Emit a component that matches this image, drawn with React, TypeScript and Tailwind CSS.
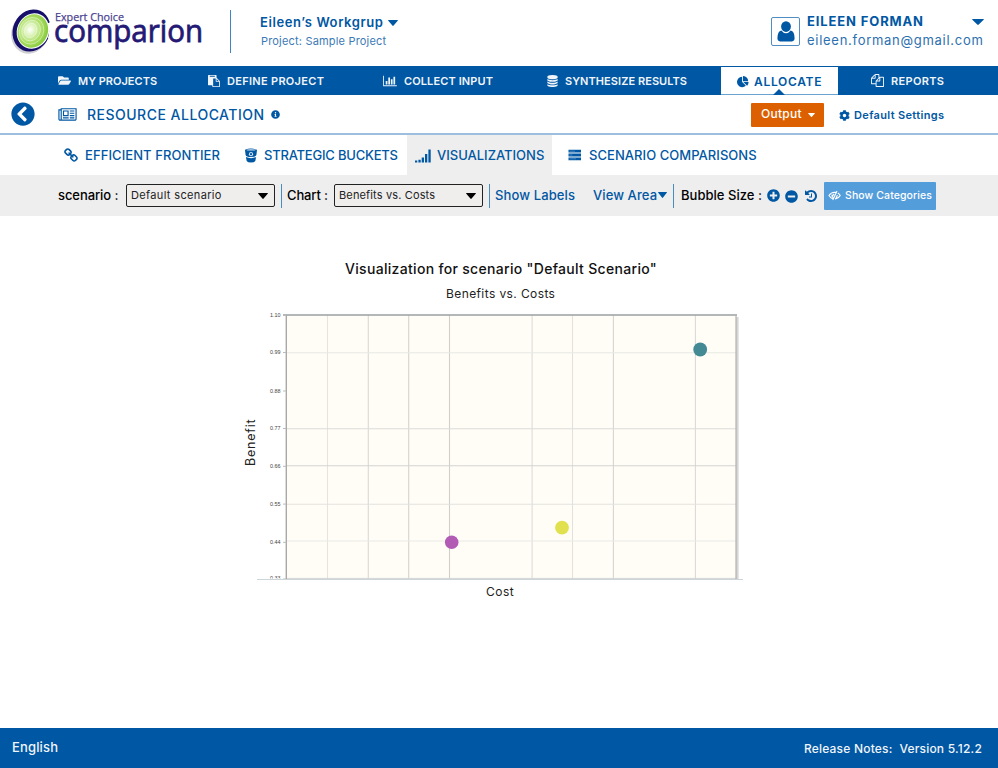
import type { ReactNode } from "react";
import {
  FaFolderOpen,
  FaInfoCircle,
  FaCog,
  FaChevronCircleLeft,
  FaPlusCircle,
  FaMinusCircle,
} from "react-icons/fa";

const PASTE =
  "M768 1664h896v-640h-416q-40 0-68-28t-28-68v-416h-384v1152zm256-1440v-64q0-13-9.5-22.5t-22.5-9.5h-704q-13 0-22.5 9.5t-9.5 22.5v64q0 13 9.5 22.5t22.5 9.5h704q13 0 22.5-9.5t9.5-22.5zm256 672h299l-299-299v299zm512 128v672q0 40-28 68t-68 28h-960q-40 0-68-28t-28-68v-160h-544q-40 0-68-28t-28-68v-1344q0-40 28-68t68-28h1088q40 0 68 28t28 68v328q21 13 36 28l408 408q28 28 48 76t20 88z";
const BARS =
  "M640 896v512h-256v-512h256zm384-512v1024h-256v-1024h256zm1024 1152v128h-2048v-1536h128v1408h1920zm-640-896v768h-256v-768h256zm384-384v1152h-256v-1152h256z";
const DATABASE =
  "M896 768q237 0 443-43t325-127v170q0 69-103 128t-280 93.5-385 34.5-385-34.5-280-93.5-103-128v-170q119 84 325 127t443 43zm0 768q237 0 443-43t325-127v170q0 69-103 128t-280 93.5-385 34.5-385-34.5-280-93.5-103-128v-170q119 84 325 127t443 43zm0-384q237 0 443-43t325-127v170q0 69-103 128t-280 93.5-385 34.5-385-34.5-280-93.5-103-128v-170q119 84 325 127t443 43zm0-1152q208 0 385 34.5t280 93.5 103 128v128q0 69-103 128t-280 93.5-385 34.5-385-34.5-280-93.5-103-128v-128q0-69 103-128t280-93.5 385-34.5z";
const PIE =
  "M768 890l546 546q-106 108-247.5 168t-298.5 60q-209 0-385.5-103t-279.5-279.5-103-385.5 103-385.5 279.5-279.5 385.5-103v762zm187 6h773q0 157-60 298.5t-168 247.5zm709-128h-768v-768q209 0 385.5 103t279.5 279.5 103 385.5z";
const FILES =
  "M1696 384q40 0 68 28t28 68v1216q0 40-28 68t-68 28h-960q-40 0-68-28t-28-68v-288h-544q-40 0-68-28t-28-68v-672q0-40 20-88t48-76l408-408q28-28 76-48t88-20h416q40 0 68 28t28 68v328q68-40 128-40h416zm-544 213l-299 299h299v-299zm-640-384l-299 299h299v-299zm196 647l316-316v-416h-384v416q0 40-28 68t-68 28h-416v640h512v-256q0-40 20-88t48-76zm956 804v-1152h-384v416q0 40-28 68t-68 28h-416v640h896z";
const NEWS =
  "M1024 512h-384v384h384v-384zm128 640v128h-640v-128h640zm0-768v640h-640v-640h640zm640 768v128h-512v-128h512zm0-256v128h-512v-128h512zm0-256v128h-512v-128h512zm0-256v128h-512v-128h512zm-1536 960v-960h-128v960q0 26 19 45t45 19 45-19 19-45zm1664 0v-1088h-1536v1088q0 33-11 64h1483q26 0 45-19t19-45zm128-1216v1216q0 80-56 136t-136 56h-1664q-80 0-136-56t-56-136v-1088h256v-128h1792z";
const CHAIN =
  "M1456 1216q0-40-28-68l-208-208q-28-28-68-28-42 0-72 32 3 3 19 18.5t21.5 21.5 15 19 13 25.5 3.5 27.5q0 40-28 68t-68 28q-15 0-27.5-3.5t-25.5-13-19-15-21.5-21.5-18.5-19q-33 31-33 73 0 40 28 68l206 207q27 27 68 27 40 0 68-26l147-146q28-28 28-67zm-703-705q0-40-28-68l-206-207q-28-28-68-28-39 0-68 27l-147 146q-28 28-28 67 0 40 28 68l208 208q27 27 68 27 42 0 72-31-3-3-19-18.5t-21.5-21.5-15-19-13-25.5-3.5-27.5q0-40 28-68t68-28q15 0 27.5 3.5t25.5 13 19 15 21.5 21.5 18.5 19q33-31 33-73zm895 705q0 120-85 203l-147 146q-83 83-203 83-121 0-204-85l-206-207q-83-83-83-203 0-123 88-209l-88-88q-86 88-208 88-120 0-204-84l-208-208q-84-84-84-204t85-203l147-146q83-83 203-83 121 0 204 85l206 207q83 83 83 203 0 123-88 209l88 88q86-88 208-88 120 0 204 84l208 208q84 84 84 204z";
const HISTORY =
  "M1664 896q0 156-61 298t-164 245-245 164-298 61q-172 0-327-72.5t-264-204.5q-7-10-6.5-22.5t8.5-20.5l137-138q10-9 25-9 16 2 23 12 73 95 179 147t225 52q104 0 198.5-40.5t163.5-109.5 109.5-163.5 40.5-198.5-40.5-198.5-109.5-163.5-163.5-109.5-198.5-40.5q-98 0-188 35.5t-160 101.5l137 138q31 30 14 69-17 40-59 40h-448q-26 0-45-19t-19-45v-448q0-42 40-59 39-17 69 14l130 129q107-101 244.5-156.5t284.5-55.5q156 0 298 61t245 164 164 245 61 298zm-640-288v448q0 14-9 23t-23 9h-320q-14 0-23-9t-9-23v-64q0-14 9-23t23-9h224v-352q0-14 9-23t23-9h64q14 0 23 9t9 23z";

function Glyph({ d, box = "0 0 1792 1792", className }: { d: string; box?: string; className: string }) {
  return (
    <svg viewBox={box} fill="currentColor" className={className}>
      <path d={d} />
    </svg>
  );
}

function Caret({ className }: { className: string }) {
  return (
    <svg viewBox="0 0 10 6" preserveAspectRatio="none" fill="currentColor" className={className}>
      <path d="M.5 0h9q.8.1.2.8L5.6 5.6q-.6.6-1.2 0L.3.8Q-.2.1.5 0z" />
    </svg>
  );
}

function Logo() {
  return (
    <svg viewBox="0 0 220 60" className="h-[60px] w-[220px] shrink-0">
      <defs>
        <radialGradient id="lime" cx="0.4" cy="0.5" r="0.6">
          <stop offset="0" stopColor="#ffffff" />
          <stop offset="0.25" stopColor="#e2f6c4" />
          <stop offset="0.65" stopColor="#aadd62" />
          <stop offset="1" stopColor="#84c93a" />
        </radialGradient>
      </defs>
      <ellipse cx="30" cy="33" rx="18.5" ry="21" fill="#cfcfd4" transform="rotate(22 30 33)" />
      <ellipse cx="31.500" cy="30.500" rx="18.500" ry="21.500" fill="#17106b" transform="rotate(24 31.500 30.500)" />
      <path d="M47.500 23.500l6-3v20l-5.500-2.500q2.500-7-.5-14.500z" fill="#fff" />
      <ellipse cx="33" cy="31" rx="16" ry="18" fill="#fff" transform="rotate(24 33 31)" />
      <ellipse cx="32.800" cy="31" rx="15" ry="17" fill="url(#lime)" transform="rotate(24 32.800 31)" />
      <g fill="none" stroke="#fff" strokeOpacity=".55" strokeWidth=".7" transform="rotate(24 32 31)">
        <ellipse cx="31.500" cy="31" rx="12" ry="13.500" />
        <ellipse cx="31" cy="31" rx="9" ry="10.500" />
        <ellipse cx="30.500" cy="31" rx="6" ry="7.200" />
      </g>
      <text x="55" y="20.800" textLength="69" lengthAdjust="spacingAndGlyphs" fontFamily="'Open Sans', sans-serif" fontSize="11.500" fill="#4b4390" stroke="#4b4390" strokeWidth=".25">
        Expert Choice
      </text>
      <text x="54" y="42" textLength="149" lengthAdjust="spacingAndGlyphs" fontFamily="'Open Sans', sans-serif" fontSize="31" fill="#241a75" stroke="#241a75" strokeWidth=".8">
        comparion
      </text>
    </svg>
  );
}

function Select({ children }: { children: ReactNode }) {
  return (
    <div className="flex h-[23px] w-[149px] shrink-0 items-center justify-between rounded-[2px] border border-[#222] bg-[#efeeed] pr-[6px] pl-[4px] text-[11px] font-normal text-[#222]">
      {children}
      <Caret className="h-[6px] w-[10px] text-black" />
    </div>
  );
}

const V_LINES: [number, string][] = [
  [327.5, "#e6e4df"],
  [368.3, "#d9d8d5"],
  [408.7, "#d4d3d1"],
  [449.5, "#d0cfce"],
  [532.1, "#dddbd9"],
  [572.5, "#e3e1dd"],
  [613.4, "#d6d5d4"],
  [695.4, "#dbdad8"],
];
const H_LINES: [number, string][] = [
  [352.7, "#e8e8e4"],
  [428.7, "#dddcd9"],
  [465.7, "#d4d3d2"],
  [504.2, "#e3e2de"],
  [541, "#ebeae6"],
];
const TICKS: [number, string][] = [
  [315, "1.10"],
  [352, "0.99"],
  [390.5, "0.88"],
  [428, "0.77"],
  [465.8, "0.66"],
  [503.6, "0.55"],
  [541.8, "0.44"],
  [578, "0.33"],
];

function Chart() {
  return (
    <svg viewBox="240 305 510 300" className="ml-[240px] h-[300px] w-[510px]">
      <rect x="736" y="317" width="2.6" height="262" fill="#d6d6d6" />
      <rect x="286" y="315" width="450" height="264" fill="#fffdf6" />
      {V_LINES.map(([x, c]) => (
        <line key={x} x1={x} x2={x} y1="315" y2="579" stroke={c} strokeWidth="1.1" />
      ))}
      {H_LINES.map(([y, c]) => (
        <line key={y} x1="286" x2="736" y1={y} y2={y} stroke={c} strokeWidth="1.1" />
      ))}
      <line x1="286" x2="736" y1="578.4" y2="578.4" stroke="#d4d4d4" strokeWidth="1" />
      <line x1="283" x2="737" y1="315" y2="315" stroke="#9b9fa3" strokeWidth="1.3" />
      <line x1="736" x2="736" y1="315" y2="579" stroke="#b3b3b3" strokeWidth="1.2" />
      <line x1="286.3" x2="286.3" y1="315" y2="579" stroke="#a9a9a9" strokeWidth="1.4" />
      <clipPath id="labels">
        <rect x="240" y="305" width="46" height="273.6" />
      </clipPath>
      <g clipPath="url(#labels)">
        {TICKS.map(([y, t]) => (
          <g key={t}>
            <line x1="283" x2="286" y1={y + 0.5} y2={y + 0.5} stroke="#bbb" strokeWidth="1" />
            <text x="270" y={y + 2} textLength="10.5" lengthAdjust="spacingAndGlyphs" fontFamily="'Liberation Sans', sans-serif" fontSize="5" fill="#444">
              {t}
            </text>
          </g>
        ))}
      </g>
      <line x1="257" x2="743" y1="579.5" y2="579.5" stroke="#cbd5da" strokeWidth="1" />
      <circle cx="700.2" cy="349.5" r="6.9" fill="#438a95" />
      <circle cx="562" cy="527.7" r="6.9" fill="#e1e150" />
      <circle cx="451.7" cy="542.2" r="6.8" fill="#b15bb5" />
      <text transform="translate(255 466) rotate(-90)" fontFamily="Inter, sans-serif" fontSize="12.500" letterSpacing=".8" fill="#222">
        Benefit
      </text>
      <text x="486" y="596" fontFamily="Inter, sans-serif" fontSize="12" letterSpacing=".5" fill="#222">
        Cost
      </text>
    </svg>
  );
}

export default function App() {
  return (
    <div className="flex h-[768px] w-[998px] flex-col overflow-hidden bg-white font-['Inter',sans-serif] whitespace-nowrap text-[#0057a3]">
      <header className="flex h-[66px] shrink-0">
        <div className="w-[230px]">
          <Logo />
        </div>
        <div className="mt-[10px] h-[43px] w-px bg-[#3f85bf]" />
        <div className="ml-[29px] w-[511px] pt-[14px]">
          <div className="flex h-[17px] items-center text-[13px] font-semibold tracking-[0.6px]">
            Eileen’s Workgrup
            <Caret className="ml-[4px] h-[6px] w-[10px]" />
          </div>
          <div className="mt-[2px] h-[16px] pl-px text-[11px] leading-[16px] tracking-[0.18px] text-[#3b7ab6]">Project: Sample Project</div>
        </div>
        <div className="mt-[17px] flex h-[29px] w-[29px] shrink-0 items-center justify-center rounded-[2px] border border-[#4f8dc2]">
          <svg viewBox="0 0 18 21" fill="currentColor" className="h-[21px] w-[18px]">
            <ellipse cx="9" cy="5.6" rx="4.9" ry="5.3" />
            <path d="M4.300 9.500Q6.300 12.200 9 12.200T13.700 9.500Q17.500 10.300 17.600 17.300Q17.500 20.200 14.900 20.400H3.100Q.500 20.200.400 17.300Q.500 10.300 4.300 9.500z" />
          </svg>
        </div>
        <div className="ml-[7px] w-[177px] pt-[13px]">
          <div className="flex h-[18px] items-center justify-between text-[13px] font-bold tracking-[0.87px]">
            EILEEN FORMAN
            <Caret className="mb-px h-[6px] w-[12px]" />
          </div>
          <div className="h-[18px] text-[13px] leading-[18px] tracking-[0.72px] text-[#2d70b0]">eileen.forman@gmail.com</div>
        </div>
      </header>

      <nav className="flex h-[29px] shrink-0 items-center bg-[#0057a3] pl-[58px] text-[11px] font-semibold text-[#f0f5fa]">
        <div className="flex w-[150px] items-center pt-px">
          <FaFolderOpen className="mr-[7px] mb-px h-[13px] w-[13px]" />
          MY PROJECTS
        </div>
        <div className="flex w-[175px] items-center pt-[2px] tracking-[0.3px]">
          <Glyph d={PASTE} className="mr-[7px] mb-[2px] h-[12px] w-[12px]" />
          DEFINE PROJECT
        </div>
        <div className="flex w-[163px] items-center pt-px tracking-[0.11px]">
          <Glyph d={BARS} box="0 0 2048 1792" className="mr-[7px] mb-px h-[12px] w-[14px]" />
          COLLECT INPUT
        </div>
        <div className="flex w-[175px] items-center pt-px tracking-[0.06px]">
          <Glyph d={DATABASE} className="mr-[6px] mb-px h-[12px] w-[13px]" />
          SYNTHESIZE RESULTS
        </div>
        <div className="relative mt-[1px] flex h-[28px] w-[117px] items-center border-b border-[#6ba3d0] bg-white pt-[2px] pl-[16px] text-[12px] tracking-[0.7px] text-[#0057a3]">
          <Glyph d={PIE} className="mr-[5px] h-[12px] w-[12px]" />
          ALLOCATE
          <svg viewBox="0 0 12 6" fill="currentColor" className="absolute bottom-[-1px] left-[52px] h-[6px] w-[12px]">
            <path d="M6 0l6 6H0z" />
          </svg>
        </div>
        <div className="ml-[33px] flex items-center pt-px tracking-[0.33px]">
          <Glyph d={FILES} className="mr-[7px] mb-px h-[13px] w-[13px]" />
          REPORTS
        </div>
      </nav>

      <section className="flex h-[40px] shrink-0 items-center border-b-2 border-[#9dbfdd]">
        <FaChevronCircleLeft className="ml-[11px] h-[24px] w-[24px]" />
        <Glyph d={NEWS} box="0 0 2048 1792" className="mt-px ml-[23px] h-[16px] w-[19px]" />
        <h1 className="ml-[10px] w-[184px] pt-px text-[14px] font-medium tracking-[0.49px]">RESOURCE ALLOCATION</h1>
        <FaInfoCircle className="h-[9px] w-[9px]" />
        <div className="mt-px ml-[471px] flex h-[24px] w-[73px] items-center rounded-[1px] bg-[#dc6000] pb-[2px] pl-[10px] text-[12px] font-medium tracking-[0.25px] text-white">
          Output
          <Caret className="mt-[2px] ml-[6px] h-[4px] w-[7px]" />
        </div>
        <div className="ml-[15px] flex items-center pt-[2px] text-[11px] font-semibold tracking-[0.34px]">
          <FaCog className="mr-[4px] h-[11px] w-[11px]" />
          Default Settings
        </div>
      </section>

      <section className="flex h-[40px] shrink-0 items-stretch pl-[64px] text-[13px] font-medium">
        <div className="flex w-[180px] items-center pt-px tracking-[0.08px]">
          <Glyph d={CHAIN} className="mr-[6px] h-[15px] w-[15px]" />
          EFFICIENT FRONTIER
        </div>
        <div className="flex w-[163px] items-center pt-px tracking-[-0.21px]">
          <svg viewBox="0 0 14 15" className="mr-[6px] h-[15px] w-[14px]">
            <path d="M1 1.800Q7-.600 13 1.800L12.400 7Q11.800 9 7 9T1.600 7z" fill="#0057a3" />
            <ellipse cx="7" cy="1.900" rx="4.500" ry=".600" fill="#d5e4f1" />
            <circle cx="7" cy="6.200" r="2.100" fill="#d5e4f1" />
            <circle cx="7" cy="6.200" r="1.100" fill="#0057a3" />
            <path d="M1.900 9Q7 11.300 12.100 9L11.300 13Q10.300 14.500 7 14.500T2.700 13z" fill="#0057a3" />
          </svg>
          STRATEGIC BUCKETS
        </div>
        <div className="flex w-[145px] items-center bg-[#eeeeee] pt-px pl-[8px]">
          <svg viewBox="0 0 16 14" fill="currentColor" className="mr-[6px] h-[14px] w-[16px]">
            <path d="M0 11.500h2.300V13.500H0zM3.400 10.700h2.300v2.800H3.400zM6.700 8.500h2.300v5H6.700zM10 5h2.300v8.500H10zM13.400.500h2.300v13h-2.300z" />
          </svg>
          VISUALIZATIONS
        </div>
        <div className="ml-[16px] flex items-center pt-px tracking-[0.05px]">
          <svg viewBox="0 0 14 12" className="mr-[7px] mb-px h-[12px] w-[14px]">
            <path d="M.500.800h12.500v2.800H.500zM.500 4.600h12.500v2.800H.500zM.500 8.400h12.500v2.800H.500z" fill="#0057a3" />
            <path d="M1.500 2.200h5.500M1.500 6h2.800M1.500 9.800h6.500" stroke="#6fa3cf" strokeWidth=".6" />
          </svg>
          SCENARIO COMPARISONS
        </div>
      </section>

      <section className="flex h-[41px] shrink-0 items-center bg-[#eeeeee] pl-[58px] text-[13px] font-medium">
        <span className="w-[68px] pt-px tracking-[-0.08px] text-black">scenario :</span>
        <Select>
          <span className="tracking-[0.35px]">Default scenario</span>
        </Select>
        <div className="ml-[6px] h-[24px] w-px bg-[#4a8cc0]" />
        <span className="ml-[5px] w-[47px] pt-px tracking-[-0.13px] text-black">Chart :</span>
        <Select>
          <span className="tracking-[0.14px]">Benefits vs. Costs</span>
        </Select>
        <div className="ml-[6px] h-[24px] w-px bg-[#4a8cc0]" />
        <span className="ml-[5px] w-[98px] pt-px tracking-[0.12px]">Show Labels</span>
        <span className="w-[65px] pt-px tracking-[0.09px]">View Area</span>
        <Caret className="mb-[1px] h-[6px] w-[9px]" />
        <div className="ml-[6px] h-[24px] w-px bg-[#4a8cc0]" />
        <span className="ml-[7px] w-[86px] pt-px tracking-[0.03px] text-black">Bubble Size :</span>
        <FaPlusCircle className="h-[13px] w-[13px]" />
        <FaMinusCircle className="mt-px ml-[5px] h-[13px] w-[13px]" />
        <Glyph d={HISTORY} className="ml-[6px] h-[14px] w-[14px]" />
        <div className="ml-[6px] flex h-[28px] w-[112px] items-center rounded-[1px] bg-[#549ddb] pl-[4px] text-[10.5px] tracking-[0.1px] text-white">
          <svg viewBox="0 0 13 11" fill="none" stroke="currentColor" strokeWidth="1.1" className="mr-[4px] h-[11px] w-[13px]">
            <path d="M5 8.900Q2.500 8 1 5.500Q3 2.200 6.500 2.200L8 2.400M9.800 3Q11.400 4 12.200 5.500Q10.300 8.600 7 8.900M9 1L4.800 10M4 4.500Q3.600 6.600 5.200 7.600M6 3.800L4.700 6M9.300 5Q9.200 6.700 7.800 7.500" />
          </svg>
          Show Categories
        </div>
      </section>

      <main className="flex flex-1 flex-col">
        <h2 className="mt-[43px] h-[20px] pl-[345px] text-[14px] leading-[20px] font-medium tracking-[0.31px] text-[#111]">
          Visualization for scenario "Default Scenario"
        </h2>
        <div className="mt-[6px] h-[18px] pl-[446px] text-[12px] leading-[18px] tracking-[0.4px] text-[#222]">Benefits vs. Costs</div>
        <div className="mt-[2px]">
          <Chart />
        </div>
      </main>

      <footer className="flex h-[40px] shrink-0 items-center justify-between bg-[#0057a3] pr-[16px] pl-[12px] font-medium text-[#f0f5fa]">
        <span className="text-[13px] tracking-[0.15px]">English</span>
        <span className="pt-[1px] text-[12px] tracking-[0.2px] whitespace-pre">Release Notes:{"  "}Version 5.12.2</span>
      </footer>
    </div>
  );
}
